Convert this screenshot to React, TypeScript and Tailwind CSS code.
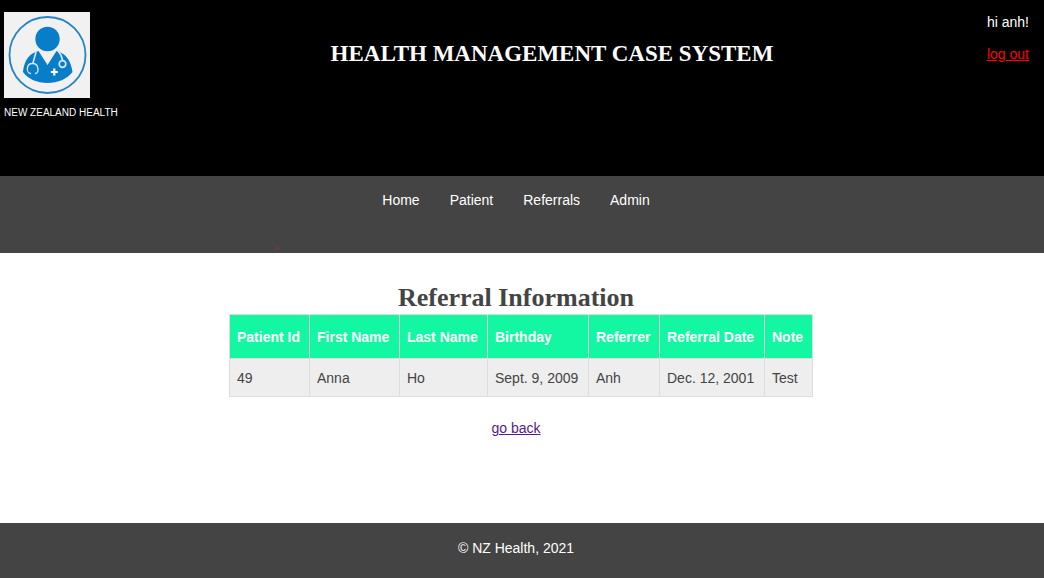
const navItems = ["Home", "Patient", "Referrals", "Admin"];

const columns = [
  { label: "Patient Id", value: "49", width: "w-20" },
  { label: "First Name", value: "Anna", width: "w-[90px]" },
  { label: "Last Name", value: "Ho", width: "w-[88px]" },
  { label: "Birthday", value: "Sept. 9, 2009", width: "w-[101px]" },
  { label: "Referrer", value: "Anh", width: "w-[71px]" },
  { label: "Referral Date", value: "Dec. 12, 2001", width: "w-[105px]" },
  { label: "Note", value: "Test", width: "w-12" },
];

function Logo() {
  return (
    <svg viewBox="0 0 86 86" className="block size-[86px]" role="img" aria-label="New Zealand Health">
      <rect width="86" height="86" fill="#f1f1f1" />
      <circle cx="43.5" cy="43" r="38" fill="none" stroke="#2484c6" strokeWidth="1.8" />
      <circle cx="43.5" cy="27" r="12.2" fill="#087dc8" />
      <path
        d="M34.5 39 L43.5 53 L52.5 39 C61 41 67 48 68.5 60 C63 67 54 71 43.5 71 C33 71 24 67 19 60 C20 48 26 41 34.5 39 Z"
        fill="#087dc8"
      />
      <g fill="none" stroke="#d5e8f4" strokeLinecap="round">
        <path d="M32 40 C31 44 30 47 29 51" strokeWidth="1.6" />
        <path d="M26.5 61.5 C22 61 22 51.5 28.5 51.5 C35 51.5 35.5 61 31.5 61.5" strokeWidth="1.3" />
        <path d="M54 39 C57 42 58 45 58.5 48" strokeWidth="1.6" />
        <circle cx="58.5" cy="52" r="3.3" strokeWidth="1.7" />
      </g>
      <path d="M50.3 56.5v7M46.8 60h7" stroke="#fff" strokeWidth="2.2" />
    </svg>
  );
}

export default function App() {
  return (
    <div className="flex min-h-screen flex-col bg-white font-['Liberation_Sans',Arial,sans-serif] text-sm leading-5 text-[#444]">
      <header className="grid h-44 grid-cols-[1fr_auto_1fr] items-start bg-black text-white">
        <div className="pt-3 pl-1">
          <Logo />
          <p className="mt-2 text-[10px] leading-[14px] whitespace-nowrap">NEW ZEALAND HEALTH</p>
        </div>
        <h1 className="pt-10 pl-15 font-['Liberation_Serif',serif] text-[23px] leading-7 font-bold whitespace-nowrap">
          HEALTH MANAGEMENT CASE SYSTEM
        </h1>
        <div className="flex flex-col items-end gap-3 pt-3 pr-[15px]">
          <span>hi anh!</span>
          <a href="#logout" className="text-[#ff0000] underline">
            log out
          </a>
        </div>
      </header>

      <nav className="relative h-[77px] bg-[#444] pt-3.5 pr-3 text-white">
        <ul className="flex justify-center gap-[30px]">
          {navItems.map((item) => (
            <li key={item}>
              <a href={"#" + item.toLowerCase()}>{item}</a>
            </li>
          ))}
        </ul>
        <span className="absolute bottom-1 left-[276px] block h-[2px] w-[3px] bg-[#8c2f3a]" />
      </nav>

      <main className="flex grow flex-col items-center">
        <h2 className="mt-[29px] pr-3 font-['Liberation_Serif',serif] text-[26px] leading-8 font-bold">
          Referral Information
        </h2>
        <div className="pr-0.5">
          <table className="table-fixed border-collapse border border-[#ddd] text-left">
            <thead className="bg-[#14f7a2] text-white">
              <tr className="h-11">
                {columns.map((c) => (
                  <th key={c.label} scope="col" className={"border border-[#ddd] px-[7px] font-bold whitespace-nowrap " + c.width}>
                    {c.label}
                  </th>
                ))}
              </tr>
            </thead>
            <tbody className="bg-[#eee]">
              <tr className="h-[38px]">
                {columns.map((c) => (
                  <td key={c.label} className="border border-[#ddd] px-[7px] whitespace-nowrap">
                    {c.value}
                  </td>
                ))}
              </tr>
            </tbody>
          </table>
        </div>
        <p className="mt-[21px] pr-3">
          <a href="#back" className="text-[#551a8b] underline">
            go back
          </a>
        </p>
      </main>

      <footer className="h-[55px] bg-[#444] pt-[15px] pr-3 text-center text-white">© NZ Health, 2021</footer>
    </div>
  );
}
